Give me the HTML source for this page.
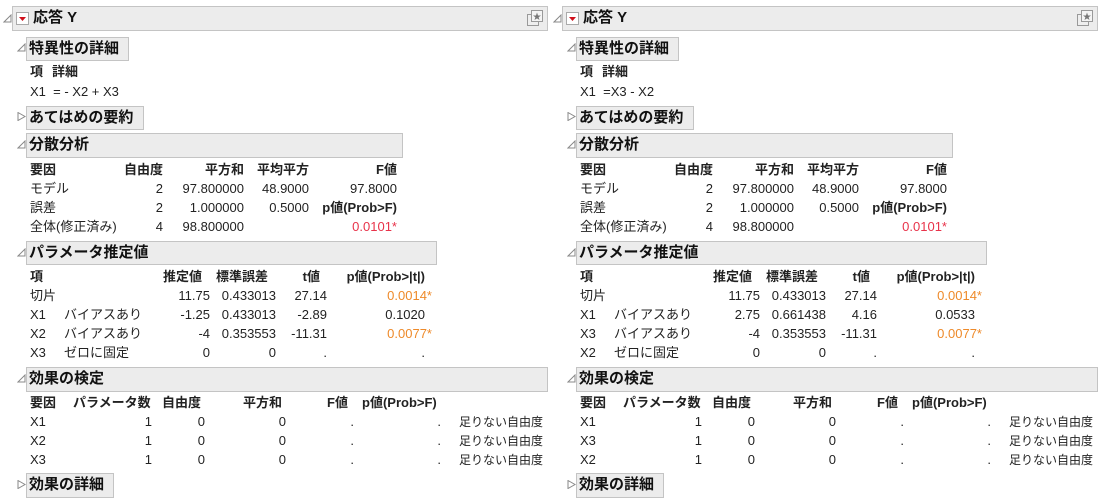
<!DOCTYPE html>
<html><head><meta charset="utf-8"><style>
*{margin:0;padding:0;box-sizing:border-box}
body{width:1100px;height:501px;background:#fff;position:relative;overflow:hidden;font-family:"Liberation Sans","Noto Sans CJK JP",sans-serif;font-size:13px;color:#222}
.p{position:absolute;top:0;width:550px;height:501px}
.a{position:absolute;white-space:nowrap;line-height:14px}
.r{position:absolute;white-space:nowrap;line-height:14px;width:200px;text-align:right}
.b{font-weight:bold}
.s{font-size:12px}
.box{position:absolute;background:#ececec;border:1px solid #c4c4c4;font-weight:bold;font-size:15px;line-height:22px;padding-left:2px;color:#111}
.tri{position:absolute;width:9px;height:9px}
.red{color:#e8334a}.org{color:#ee8a2a}
</style></head><body>

<!-- LEFT PANEL -->
<div class="p" style="left:0">
<svg class="tri" style="left:3px;top:14px" viewBox="0 0 9 9"><polygon points="8,1 8,8 1,8" fill="none" stroke="#888"/></svg>
<div class="box" style="left:12px;top:6px;width:536px;height:25px;padding-left:20px">応答 Y</div>
<svg style="position:absolute;left:16px;top:12px" width="13" height="13"><rect x="0.5" y="0.5" width="12" height="12" fill="#fff" stroke="#aaa"/><polygon points="3,5 10,5 6.5,9" fill="#d0101c"/></svg>
<svg style="position:absolute;left:526px;top:9px" width="18" height="18"><rect x="1.5" y="5.5" width="11" height="11" fill="#eee" stroke="#999"/><rect x="5.5" y="1.5" width="11" height="11" fill="#f4f4f4" stroke="#999"/><polygon points="11,3.5 12,6.5 15,6.5 12.6,8.3 13.5,11 11,9.4 8.5,11 9.4,8.3 7,6.5 10,6.5" fill="#777"/></svg>

<svg class="tri" style="left:17px;top:43px" viewBox="0 0 9 9"><polygon points="8,1 8,8 1,8" fill="none" stroke="#888"/></svg>
<div class="box" style="left:26px;top:37px;width:103px;height:24px">特異性の詳細</div>
<div class="a b" style="left:30px;top:65px">項</div><div class="a b" style="left:52px;top:65px">詳細</div>
<div class="a" style="left:30px;top:85px">X1 &nbsp;= - X2 + X3</div>

<svg class="tri" style="left:17px;top:112px" viewBox="0 0 9 9"><polygon points="1,0.5 8,4.5 1,8.5" fill="none" stroke="#888"/></svg>
<div class="box" style="left:26px;top:106px;width:118px;height:24px">あてはめの要約</div>

<svg class="tri" style="left:17px;top:140px" viewBox="0 0 9 9"><polygon points="8,1 8,8 1,8" fill="none" stroke="#888"/></svg>
<div class="box" style="left:26px;top:133px;width:377px;height:25px">分散分析</div>
<div class="a b" style="left:30px;top:163px">要因</div>
<div class="r b" style="left:-37px;top:163px">自由度</div>
<div class="r b" style="left:44px;top:163px">平方和</div>
<div class="r b" style="left:109px;top:163px">平均平方</div>
<div class="r b" style="left:197px;top:163px">F値</div>
<div class="a" style="left:30px;top:182px">モデル</div>
<div class="r" style="left:-37px;top:182px">2</div>
<div class="r" style="left:44px;top:182px">97.800000</div>
<div class="r" style="left:109px;top:182px">48.9000</div>
<div class="r" style="left:197px;top:182px">97.8000</div>
<div class="a" style="left:30px;top:201px">誤差</div>
<div class="r" style="left:-37px;top:201px">2</div>
<div class="r" style="left:44px;top:201px">1.000000</div>
<div class="r" style="left:109px;top:201px">0.5000</div>
<div class="r b" style="left:197px;top:201px">p値(Prob&gt;F)</div>
<div class="a" style="left:30px;top:220px">全体(修正済み)</div>
<div class="r" style="left:-37px;top:220px">4</div>
<div class="r" style="left:44px;top:220px">98.800000</div>
<div class="r red" style="left:197px;top:220px">0.0101*</div>

<svg class="tri" style="left:17px;top:248px" viewBox="0 0 9 9"><polygon points="8,1 8,8 1,8" fill="none" stroke="#888"/></svg>
<div class="box" style="left:26px;top:241px;width:411px;height:24px">パラメータ推定値</div>
<div class="a b" style="left:30px;top:270px">項</div>
<div class="r b" style="left:2px;top:270px">推定値</div>
<div class="r b" style="left:68px;top:270px">標準誤差</div>
<div class="r b" style="left:120px;top:270px">t値</div>
<div class="r b" style="left:225px;top:270px">p値(Prob&gt;|t|)</div>
<div class="a" style="left:30px;top:289px">切片</div>
<div class="r" style="left:10px;top:289px">11.75</div><div class="r" style="left:76px;top:289px">0.433013</div><div class="r" style="left:127px;top:289px">27.14</div><div class="r org" style="left:232px;top:289px">0.0014*</div>
<div class="a" style="left:30px;top:308px">X1</div><div class="a" style="left:64px;top:308px">バイアスあり</div>
<div class="r" style="left:10px;top:308px">-1.25</div><div class="r" style="left:76px;top:308px">0.433013</div><div class="r" style="left:127px;top:308px">-2.89</div><div class="r" style="left:225px;top:308px">0.1020</div>
<div class="a" style="left:30px;top:327px">X2</div><div class="a" style="left:64px;top:327px">バイアスあり</div>
<div class="r" style="left:10px;top:327px">-4</div><div class="r" style="left:76px;top:327px">0.353553</div><div class="r" style="left:127px;top:327px">-11.31</div><div class="r org" style="left:232px;top:327px">0.0077*</div>
<div class="a" style="left:30px;top:346px">X3</div><div class="a" style="left:64px;top:346px">ゼロに固定</div>
<div class="r" style="left:10px;top:346px">0</div><div class="r" style="left:76px;top:346px">0</div><div class="r" style="left:127px;top:346px">.</div><div class="r" style="left:225px;top:346px">.</div>

<svg class="tri" style="left:17px;top:374px" viewBox="0 0 9 9"><polygon points="8,1 8,8 1,8" fill="none" stroke="#888"/></svg>
<div class="box" style="left:26px;top:367px;width:522px;height:25px">効果の検定</div>
<div class="a b" style="left:30px;top:396px">要因</div>
<div class="a b" style="left:73px;top:396px">パラメータ数</div>
<div class="a b" style="left:162px;top:396px">自由度</div>
<div class="a b" style="left:243px;top:396px">平方和</div>
<div class="a b" style="left:327px;top:396px">F値</div>
<div class="a b" style="left:362px;top:396px">p値(Prob&gt;F)</div>
<div class="a" style="left:30px;top:415px">X1</div><div class="r" style="left:-48px;top:415px">1</div><div class="r" style="left:5px;top:415px">0</div><div class="r" style="left:86px;top:415px">0</div><div class="r" style="left:154px;top:415px">.</div><div class="r" style="left:241px;top:415px">.</div><div class="a s" style="left:459px;top:415px">足りない自由度</div>
<div class="a" style="left:30px;top:434px">X2</div><div class="r" style="left:-48px;top:434px">1</div><div class="r" style="left:5px;top:434px">0</div><div class="r" style="left:86px;top:434px">0</div><div class="r" style="left:154px;top:434px">.</div><div class="r" style="left:241px;top:434px">.</div><div class="a s" style="left:459px;top:434px">足りない自由度</div>
<div class="a" style="left:30px;top:453px">X3</div><div class="r" style="left:-48px;top:453px">1</div><div class="r" style="left:5px;top:453px">0</div><div class="r" style="left:86px;top:453px">0</div><div class="r" style="left:154px;top:453px">.</div><div class="r" style="left:241px;top:453px">.</div><div class="a s" style="left:459px;top:453px">足りない自由度</div>

<svg class="tri" style="left:17px;top:480px" viewBox="0 0 9 9"><polygon points="1,0.5 8,4.5 1,8.5" fill="none" stroke="#888"/></svg>
<div class="box" style="left:26px;top:473px;width:88px;height:25px">効果の詳細</div>
</div>

<!-- RIGHT PANEL -->
<div class="p" style="left:550px">
<svg class="tri" style="left:3px;top:14px" viewBox="0 0 9 9"><polygon points="8,1 8,8 1,8" fill="none" stroke="#888"/></svg>
<div class="box" style="left:12px;top:6px;width:536px;height:25px;padding-left:20px">応答 Y</div>
<svg style="position:absolute;left:16px;top:12px" width="13" height="13"><rect x="0.5" y="0.5" width="12" height="12" fill="#fff" stroke="#aaa"/><polygon points="3,5 10,5 6.5,9" fill="#d0101c"/></svg>
<svg style="position:absolute;left:526px;top:9px" width="18" height="18"><rect x="1.5" y="5.5" width="11" height="11" fill="#eee" stroke="#999"/><rect x="5.5" y="1.5" width="11" height="11" fill="#f4f4f4" stroke="#999"/><polygon points="11,3.5 12,6.5 15,6.5 12.6,8.3 13.5,11 11,9.4 8.5,11 9.4,8.3 7,6.5 10,6.5" fill="#777"/></svg>

<svg class="tri" style="left:17px;top:43px" viewBox="0 0 9 9"><polygon points="8,1 8,8 1,8" fill="none" stroke="#888"/></svg>
<div class="box" style="left:26px;top:37px;width:103px;height:24px">特異性の詳細</div>
<div class="a b" style="left:30px;top:65px">項</div><div class="a b" style="left:52px;top:65px">詳細</div>
<div class="a" style="left:30px;top:85px">X1 &nbsp;=X3 - X2</div>

<svg class="tri" style="left:17px;top:112px" viewBox="0 0 9 9"><polygon points="1,0.5 8,4.5 1,8.5" fill="none" stroke="#888"/></svg>
<div class="box" style="left:26px;top:106px;width:118px;height:24px">あてはめの要約</div>

<svg class="tri" style="left:17px;top:140px" viewBox="0 0 9 9"><polygon points="8,1 8,8 1,8" fill="none" stroke="#888"/></svg>
<div class="box" style="left:26px;top:133px;width:377px;height:25px">分散分析</div>
<div class="a b" style="left:30px;top:163px">要因</div>
<div class="r b" style="left:-37px;top:163px">自由度</div>
<div class="r b" style="left:44px;top:163px">平方和</div>
<div class="r b" style="left:109px;top:163px">平均平方</div>
<div class="r b" style="left:197px;top:163px">F値</div>
<div class="a" style="left:30px;top:182px">モデル</div>
<div class="r" style="left:-37px;top:182px">2</div>
<div class="r" style="left:44px;top:182px">97.800000</div>
<div class="r" style="left:109px;top:182px">48.9000</div>
<div class="r" style="left:197px;top:182px">97.8000</div>
<div class="a" style="left:30px;top:201px">誤差</div>
<div class="r" style="left:-37px;top:201px">2</div>
<div class="r" style="left:44px;top:201px">1.000000</div>
<div class="r" style="left:109px;top:201px">0.5000</div>
<div class="r b" style="left:197px;top:201px">p値(Prob&gt;F)</div>
<div class="a" style="left:30px;top:220px">全体(修正済み)</div>
<div class="r" style="left:-37px;top:220px">4</div>
<div class="r" style="left:44px;top:220px">98.800000</div>
<div class="r red" style="left:197px;top:220px">0.0101*</div>

<svg class="tri" style="left:17px;top:248px" viewBox="0 0 9 9"><polygon points="8,1 8,8 1,8" fill="none" stroke="#888"/></svg>
<div class="box" style="left:26px;top:241px;width:411px;height:24px">パラメータ推定値</div>
<div class="a b" style="left:30px;top:270px">項</div>
<div class="r b" style="left:2px;top:270px">推定値</div>
<div class="r b" style="left:68px;top:270px">標準誤差</div>
<div class="r b" style="left:120px;top:270px">t値</div>
<div class="r b" style="left:225px;top:270px">p値(Prob&gt;|t|)</div>
<div class="a" style="left:30px;top:289px">切片</div>
<div class="r" style="left:10px;top:289px">11.75</div><div class="r" style="left:76px;top:289px">0.433013</div><div class="r" style="left:127px;top:289px">27.14</div><div class="r org" style="left:232px;top:289px">0.0014*</div>
<div class="a" style="left:30px;top:308px">X1</div><div class="a" style="left:64px;top:308px">バイアスあり</div>
<div class="r" style="left:10px;top:308px">2.75</div><div class="r" style="left:76px;top:308px">0.661438</div><div class="r" style="left:127px;top:308px">4.16</div><div class="r" style="left:225px;top:308px">0.0533</div>
<div class="a" style="left:30px;top:327px">X3</div><div class="a" style="left:64px;top:327px">バイアスあり</div>
<div class="r" style="left:10px;top:327px">-4</div><div class="r" style="left:76px;top:327px">0.353553</div><div class="r" style="left:127px;top:327px">-11.31</div><div class="r org" style="left:232px;top:327px">0.0077*</div>
<div class="a" style="left:30px;top:346px">X2</div><div class="a" style="left:64px;top:346px">ゼロに固定</div>
<div class="r" style="left:10px;top:346px">0</div><div class="r" style="left:76px;top:346px">0</div><div class="r" style="left:127px;top:346px">.</div><div class="r" style="left:225px;top:346px">.</div>

<svg class="tri" style="left:17px;top:374px" viewBox="0 0 9 9"><polygon points="8,1 8,8 1,8" fill="none" stroke="#888"/></svg>
<div class="box" style="left:26px;top:367px;width:522px;height:25px">効果の検定</div>
<div class="a b" style="left:30px;top:396px">要因</div>
<div class="a b" style="left:73px;top:396px">パラメータ数</div>
<div class="a b" style="left:162px;top:396px">自由度</div>
<div class="a b" style="left:243px;top:396px">平方和</div>
<div class="a b" style="left:327px;top:396px">F値</div>
<div class="a b" style="left:362px;top:396px">p値(Prob&gt;F)</div>
<div class="a" style="left:30px;top:415px">X1</div><div class="r" style="left:-48px;top:415px">1</div><div class="r" style="left:5px;top:415px">0</div><div class="r" style="left:86px;top:415px">0</div><div class="r" style="left:154px;top:415px">.</div><div class="r" style="left:241px;top:415px">.</div><div class="a s" style="left:459px;top:415px">足りない自由度</div>
<div class="a" style="left:30px;top:434px">X3</div><div class="r" style="left:-48px;top:434px">1</div><div class="r" style="left:5px;top:434px">0</div><div class="r" style="left:86px;top:434px">0</div><div class="r" style="left:154px;top:434px">.</div><div class="r" style="left:241px;top:434px">.</div><div class="a s" style="left:459px;top:434px">足りない自由度</div>
<div class="a" style="left:30px;top:453px">X2</div><div class="r" style="left:-48px;top:453px">1</div><div class="r" style="left:5px;top:453px">0</div><div class="r" style="left:86px;top:453px">0</div><div class="r" style="left:154px;top:453px">.</div><div class="r" style="left:241px;top:453px">.</div><div class="a s" style="left:459px;top:453px">足りない自由度</div>

<svg class="tri" style="left:17px;top:480px" viewBox="0 0 9 9"><polygon points="1,0.5 8,4.5 1,8.5" fill="none" stroke="#888"/></svg>
<div class="box" style="left:26px;top:473px;width:88px;height:25px">効果の詳細</div>
</div>
</body></html>
